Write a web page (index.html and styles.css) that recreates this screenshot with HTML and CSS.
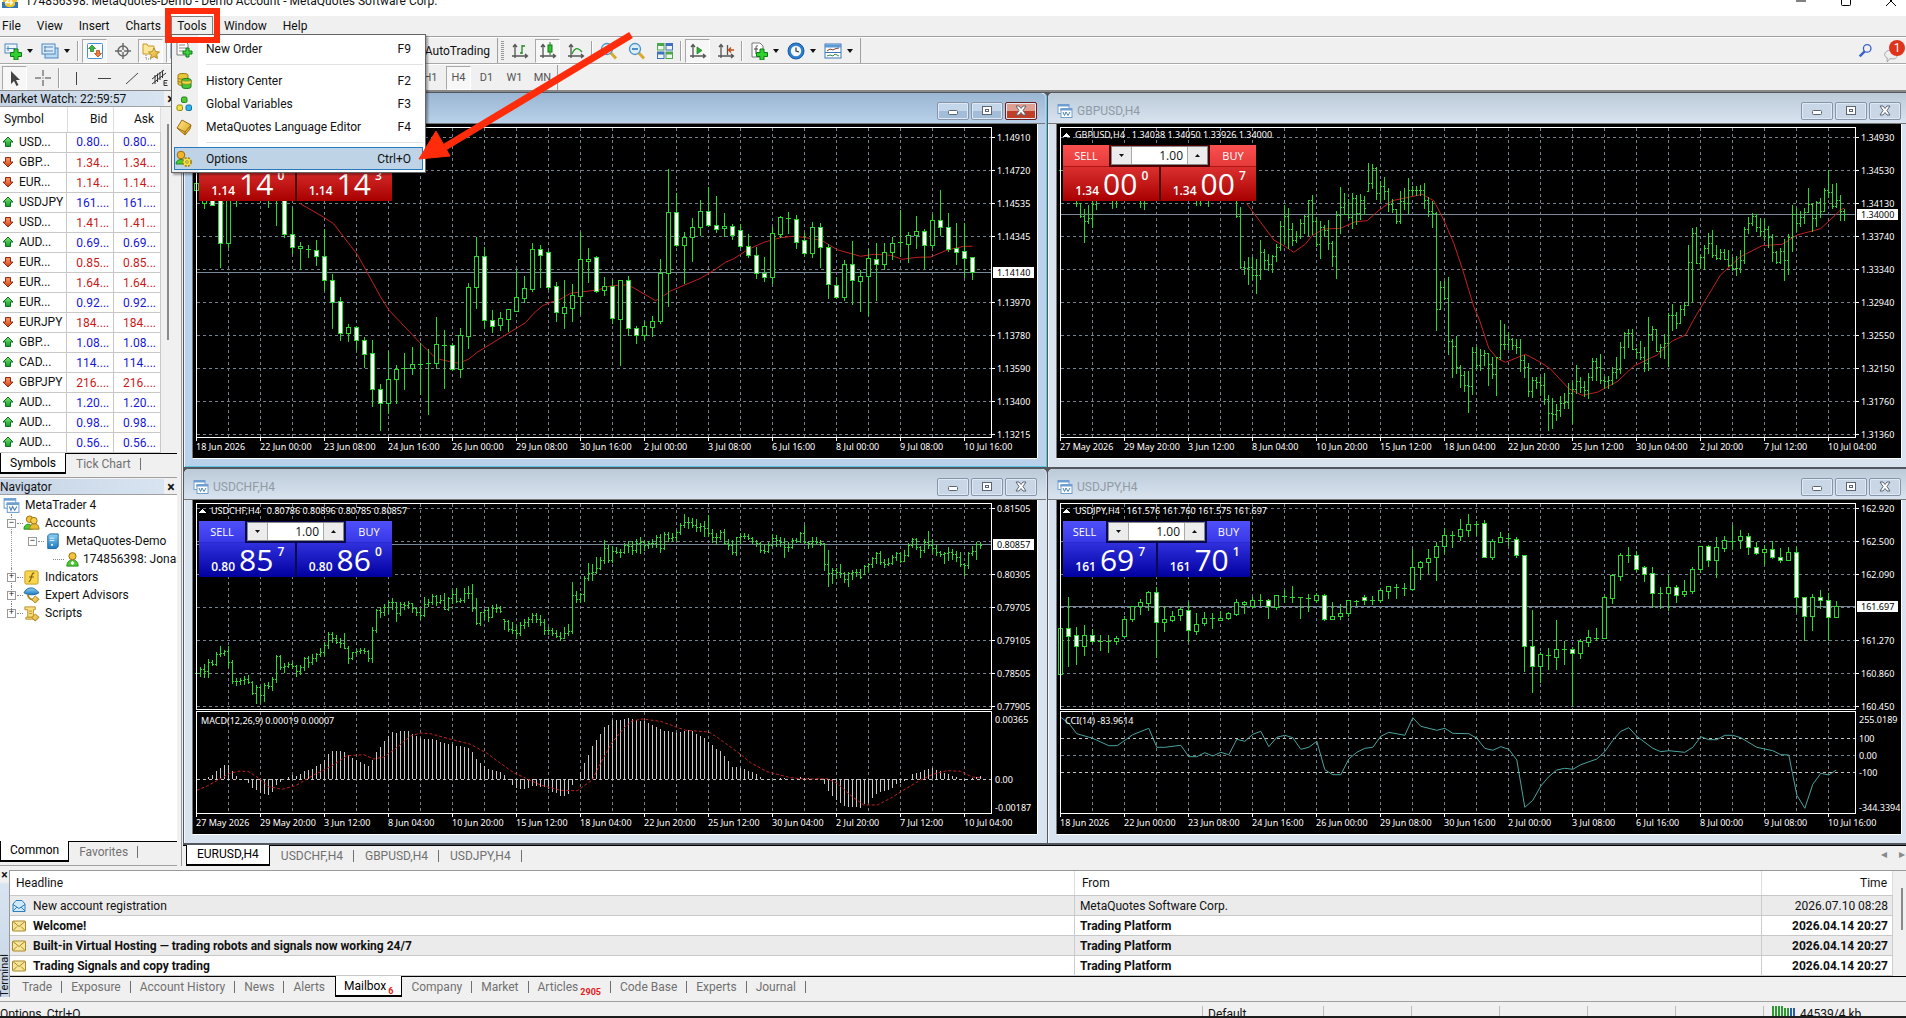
FILE: index.html
```html
<!DOCTYPE html>
<html lang="en">
<head>
<meta charset="utf-8">
<title>MetaTrader 4</title>
<link rel="stylesheet" href="styles.css">
</head>
<body>
<svg class="defs" aria-hidden="true">
  <defs>
    <linearGradient id="gGreen" x1="0" y1="0" x2="0" y2="1"><stop offset="0" stop-color="#7fe67a"/><stop offset="1" stop-color="#139a2a"/></linearGradient>
    <linearGradient id="gRed" x1="0" y1="0" x2="0" y2="1"><stop offset="0" stop-color="#ff9a6a"/><stop offset="1" stop-color="#d23a10"/></linearGradient>
    <linearGradient id="gGold" x1="0" y1="0" x2="1" y2="1"><stop offset="0" stop-color="#ffe98a"/><stop offset="1" stop-color="#d9a21b"/></linearGradient>
    <linearGradient id="gBlue" x1="0" y1="0" x2="0" y2="1"><stop offset="0" stop-color="#8fd0f5"/><stop offset="1" stop-color="#1c79bd"/></linearGradient>
  </defs>
  <symbol id="i-up" viewBox="0 0 12 12"><path d="M6 1l5 5H8.500v4.500h-5V6H1z" fill="url(#gGreen)" stroke="#0d6e1e"/></symbol>
  <symbol id="i-down" viewBox="0 0 12 12"><path d="M6 11L1 6h2.500V1.500h5V6H11z" fill="url(#gRed)" stroke="#8e2a0b"/></symbol>
  <symbol id="i-charts" viewBox="0 0 16 16"><rect x="1" y="1.500" width="11" height="9" fill="#fff" stroke="#6f9fd0"/><path d="M1 2.500h11" stroke="#6f9fd0" stroke-width="2"/><path d="M3 7l1.500-1L6 7" fill="none" stroke="#4a7fb8"/><rect x="4" y="5.500" width="11" height="9" fill="#fff" stroke="#6f9fd0"/><path d="M4 6.500h11" stroke="#6f9fd0" stroke-width="2"/><path d="M6 9l1.500 3.500L9 9l2 3.500L13 9" fill="none" stroke="#4a7fb8"/></symbol>
  <symbol id="i-newchart" viewBox="0 0 18 18"><rect x="1" y="2" width="12" height="9" fill="#eef6fd" stroke="#4f86bd"/><path d="M4 4v5M2.500 6.500h9" stroke="#4f86bd" fill="none"/><path d="M10 7h4v3.500h3.500v4H14V18h-4v-3.500H6.500v-4H10z" fill="#2fd02f" stroke="#0f7a14"/></symbol>
  <symbol id="i-profiles" viewBox="0 0 18 18"><rect x="4" y="6" width="13" height="10" fill="#b9d8f2" stroke="#4f86bd"/><rect x="1" y="2" width="13" height="10" fill="#dcebf8" stroke="#4f86bd"/><path d="M3 5h9M4 4v6M3 9h9" stroke="#4f86bd" fill="none"/></symbol>
  <symbol id="i-market" viewBox="0 0 18 18"><rect x="1.500" y="1.500" width="15" height="15" rx="1" fill="#fff" stroke="#4b8ecb"/><path d="M6 3l3.500 3.500H7.500v3h-3v-3h-2z" fill="#39b83d" stroke="#157a1b" stroke-width=".7"/><path d="M12 15l-3.500-3.500h2v-3h3v3h2z" fill="#f07a3a" stroke="#b03f10" stroke-width=".7"/></symbol>
  <symbol id="i-target" viewBox="0 0 18 18"><circle cx="9" cy="9" r="5" fill="none" stroke="#666" stroke-width="1.400"/><path d="M9 1v7M9 10v7M1 9h7M10 9h7" stroke="#666" stroke-width="1.400"/></symbol>
  <symbol id="i-folderstar" viewBox="0 0 18 18"><path d="M1 2h4l1 2h6v8H1z" fill="#ffe79a" stroke="#c79a2a"/><path d="M4 13v4h5" fill="none" stroke="#777" stroke-dasharray="1 1"/><path d="M12 6l1.700 3.600 3.800.4-2.800 2.600.8 3.900-3.500-2-3.500 2 .8-3.900L6.500 10l3.800-.4z" fill="url(#gGold)" stroke="#a87c12" stroke-width=".8"/></symbol>
  <symbol id="i-bars" viewBox="0 0 18 18"><path d="M4 3v13M1 14h15M2 5l2-2.500L6 5M14 12l2.500 2L14 16" fill="none" stroke="#555" stroke-width="1.300"/><path d="M11 3v9M9 11h2M11 4h3" stroke="#1f8a1f" stroke-width="1.300" fill="none"/></symbol>
  <symbol id="i-candles" viewBox="0 0 18 18"><path d="M4 3v13M1 14h15M2 5l2-2.500L6 5M14 12l2.500 2L14 16" fill="none" stroke="#555" stroke-width="1.300"/><path d="M11 0v13" stroke="#157a15"/><rect x="9" y="3" width="4" height="7" fill="#35c23a" stroke="#157a15"/></symbol>
  <symbol id="i-line" viewBox="0 0 18 18"><path d="M4 3v13M1 14h15M2 5l2-2.500L6 5M14 12l2.500 2L14 16" fill="none" stroke="#555" stroke-width="1.300"/><path d="M5 12c2-5 5-8 10-2" stroke="#2c9a30" stroke-width="1.300" fill="none"/></symbol>
  <symbol id="i-zoomin" viewBox="0 0 18 18"><path d="M10.500 10.500l5.500 6" stroke="#d8ab2c" stroke-width="3"/><circle cx="7" cy="7" r="5.500" fill="#d9effb" stroke="#4f90c6" stroke-width="1.300"/><path d="M4 7h6M7 4v6" stroke="#2e77b5" stroke-width="1.600"/></symbol>
  <symbol id="i-zoomout" viewBox="0 0 18 18"><path d="M10.500 10.500l5.500 6" stroke="#d8ab2c" stroke-width="3"/><circle cx="7" cy="7" r="5.500" fill="#d9effb" stroke="#4f90c6" stroke-width="1.300"/><path d="M4 7h6" stroke="#2e77b5" stroke-width="1.600"/></symbol>
  <symbol id="i-tile" viewBox="0 0 18 18"><rect x="1" y="1" width="7.500" height="7.500" fill="#4ca64a"/><rect x="9.500" y="1" width="7.500" height="7.500" fill="#3f6fc0"/><rect x="1" y="9.500" width="7.500" height="7.500" fill="#3f6fc0"/><rect x="9.500" y="9.500" width="7.500" height="7.500" fill="#4ca64a"/><path d="M2 4h5.500v3.500H2zM10.500 4H16v3.500h-5.500zM2 12.500h5.500V16H2zM10.500 12.500H16V16h-5.500z" fill="#eef6ee"/></symbol>
  <symbol id="i-scroll" viewBox="0 0 18 18"><path d="M4 3v13M1 14h15M2 5l2-2.500L6 5M14 12l2.500 2L14 16" fill="none" stroke="#555" stroke-width="1.300"/><path d="M8 5l5 3.500L8 12z" fill="#2fae35" stroke="#157a15" stroke-width=".7"/></symbol>
  <symbol id="i-shift" viewBox="0 0 18 18"><path d="M4 3v13M1 14h15M2 5l2-2.500L6 5M14 12l2.500 2L14 16M10.500 3v10" fill="none" stroke="#555" stroke-width="1.300"/><path d="M17 8h-5M14 5.500L11.500 8l2.500 2.500" fill="none" stroke="#c04a12" stroke-width="1.300"/></symbol>
  <symbol id="i-indicators" viewBox="0 0 18 18"><path d="M2 1h8l3 3v11H2z" fill="#fff" stroke="#777"/><path d="M8 4c-2-1-2 1-2 3v5M4 7h4" fill="none" stroke="#444"/><path d="M10 7h4v3.500h3.500v4H14V18h-4v-3.500H6.500v-4H10z" fill="#2fd02f" stroke="#0f7a14"/></symbol>
  <symbol id="i-clock" viewBox="0 0 18 18"><circle cx="9" cy="9" r="8" fill="#2f7fd0" stroke="#155aa0"/><circle cx="9" cy="9" r="5.200" fill="#f3f8fd"/><path d="M9 5.500V9l3 1" fill="none" stroke="#333" stroke-width="1.200"/></symbol>
  <symbol id="i-template" viewBox="0 0 18 18"><rect x="1" y="2" width="16" height="14" fill="#fff" stroke="#3f78b5"/><path d="M1 4h16" stroke="#5b9bd8" stroke-width="3"/><path d="M3 9l3-2 3 1 3-1.500 3-.5" fill="none" stroke="#8a3a2a"/><path d="M1 10.500h16" stroke="#3f78b5"/><path d="M3 14l3-1 3 1 2-2 4 2" fill="none" stroke="#3a8a4a"/></symbol>
  <symbol id="i-cursor" viewBox="0 0 18 18"><path d="M5 2v13l3-3 2.500 5 2-1-2.500-5h4z" fill="#444"/></symbol>
  <symbol id="i-cross" viewBox="0 0 18 18"><path d="M9 1v6M9 11v6M1 9h6M11 9h6M8.500 9h1" stroke="#444"/></symbol>
  <symbol id="i-vline" viewBox="0 0 18 18"><path d="M9.500 3v13" stroke="#444"/></symbol>
  <symbol id="i-hline" viewBox="0 0 18 18"><path d="M3 9.500h13" stroke="#444"/></symbol>
  <symbol id="i-trend" viewBox="0 0 18 18"><path d="M3 15L15 4" stroke="#444"/></symbol>
  <symbol id="i-channel" viewBox="0 0 18 18"><path d="M1 10L13 1M1 15L15 4M4 6v9M6.500 4.500V13M9 3v8M11.500 1.500V9" stroke="#333" fill="none"/><path d="M16.500 11.500H13v5h3.500M13 14h3" stroke="#333" fill="none"/></symbol>
  <symbol id="i-order" viewBox="0 0 18 18"><path d="M2 1h8l3 3v11H2z" fill="#fff" stroke="#777"/><path d="M4 5h6M4 8h7M4 11h4" stroke="#888"/><path d="M11 8h3v3h3v3h-3v3h-3v-3H8v-3h3z" fill="#3ad040" stroke="#0f7a14"/></symbol>
  <symbol id="i-history" viewBox="0 0 18 18"><path d="M3 3c0-2 10-2 10 0v9c0 2-10 2-10 0z" fill="#e8c63a" stroke="#9a7a12"/><path d="M3 6c0 1.500 10 1.500 10 0M3 9c0 1.500 10 1.500 10 0" fill="none" stroke="#9a7a12"/><path d="M7 8c0-2 9-2 9 0v7c0 2-9 2-9 0z" fill="#45c63a" stroke="#1a7a18"/><path d="M7 8c0 1.600 9 1.600 9 0v3c0 1.600-9 1.600-9 0z" fill="#f1da4a" stroke="#9a7a12" stroke-width=".7"/></symbol>
  <symbol id="i-globals" viewBox="0 0 18 18"><rect x="6.500" y="2" width="5.500" height="5.500" rx="1.500" fill="#4fc832" stroke="#24811a"/><rect x="2" y="10" width="5.500" height="5.500" rx="1.500" fill="#efe43a" stroke="#9a8a12"/><rect x="11" y="10" width="5.500" height="5.500" rx="1.500" fill="#2fb6ea" stroke="#13709c"/></symbol>
  <symbol id="i-editor" viewBox="0 0 18 18"><path d="M2 10l5-8 9 5-1 4-5 6z" fill="url(#gGold)" stroke="#9a6a12"/><path d="M2 10l8 4 6-7M10 14v2.500" fill="none" stroke="#9a6a12"/></symbol>
  <symbol id="i-options" viewBox="0 0 18 18"><path d="M1 14c0-6 10-6 10 0z" fill="#4fc832" stroke="#1f8a1a"/><circle cx="6" cy="5" r="3.800" fill="#f0b52a" stroke="#9a6a12"/><circle cx="12" cy="12" r="4" fill="#f7e04a" stroke="#a88a12" stroke-width="2" stroke-dasharray="2 1.200"/><circle cx="12" cy="12" r="3.300" fill="#f7e04a"/><circle cx="12" cy="12" r="1.300" fill="#fff" stroke="#a88a12"/></symbol>
  <symbol id="i-users" viewBox="0 0 18 18"><path d="M1 15c0-7 9-7 9 0z" fill="#4fc832" stroke="#1f8a1a"/><path d="M7 15c0-8 10-8 10 0z" fill="#e8bc32" stroke="#9a7a12"/><circle cx="7" cy="4.500" r="3.500" fill="#f0c53a" stroke="#9a6a12"/><circle cx="11.500" cy="6" r="3.500" fill="#f5d24a" stroke="#9a6a12"/></symbol>
  <symbol id="i-user" viewBox="0 0 18 18"><path d="M3 16c0-9 12-9 12 0z" fill="#4fc832" stroke="#1f8a1a"/><path d="M9 10l-2 3 2 2 2-2z" fill="#fff"/><circle cx="9" cy="5.500" r="3.800" fill="#f0c53a" stroke="#9a6a12"/></symbol>
  <symbol id="i-server" viewBox="0 0 18 18"><path d="M4 3l2-2h9v13l-2 2.500H4z" fill="url(#gBlue)" stroke="#15659c"/><path d="M6 5.500h5M6 8h5" stroke="#e6f5ff"/><circle cx="8.500" cy="12.500" r="1.200" fill="#e6f5ff"/></symbol>
  <symbol id="i-func" viewBox="0 0 18 18"><rect x="2" y="2" width="14" height="14" rx="1.500" fill="#f7d64e" stroke="#c09a20"/><path d="M12 4.500c-4-1-2.500 9-6 9M6.500 8.500h5" fill="none" stroke="#7a5a10" stroke-width="1.200"/></symbol>
  <symbol id="i-expert" viewBox="0 0 18 18"><path d="M1 6c3-5 6-5 8-5s4 1 8 5c-4 3-12 3-16 0z" fill="url(#gBlue)" stroke="#15659c"/><path d="M5 8c1 5 4 6 8 5" fill="none" stroke="#a8861a" stroke-width="2"/><path d="M13 9.500l4 3.500-4 4-3.500-3.500z" fill="url(#gGold)" stroke="#a87c12"/></symbol>
  <symbol id="i-script" viewBox="0 0 18 18"><path d="M2 2h11v3h-2v8H5V5H2z" fill="#f7de7a" stroke="#b8922a"/><path d="M6.500 6.500h3M6.500 9h3" stroke="#b8922a"/><path d="M3 13h9v2H3z" fill="#f7de7a" stroke="#b8922a"/><path d="M13 9.500l4 3.500-4 4-3.500-3.500z" fill="url(#gGold)" stroke="#a87c12"/></symbol>
  <symbol id="i-mail" viewBox="0 0 14 12"><rect x=".5" y="1" width="13" height="10" rx="1" fill="#f7e59a" stroke="#a8882a"/><path d="M1 1.500l6 5 6-5M1 10.500l4-4M13 10.500l-4-4" fill="none" stroke="#a8882a"/></symbol>
  <symbol id="i-mailopen" viewBox="0 0 14 12"><path d="M1 4l3-3.500h6L13 4v7.500H1z" fill="#cfe8fa" stroke="#2f7fbf"/><path d="M1 4.500l6 4 6-4M1 11l4-4M13 11L9 7" fill="none" stroke="#2f7fbf"/></symbol>
  <symbol id="i-dn" viewBox="0 0 7 4"><path d="M0 0h7L3.500 4z" fill="#111"/></symbol>
  <symbol id="i-upt" viewBox="0 0 7 4"><path d="M0 4h7L3.500 0z" fill="#111"/></symbol>
</svg>

<header class="titlebar">
  <svg class="appicon" viewBox="0 0 16 16"><circle cx="8" cy="8" r="7" fill="#f4c52c"/><path d="M0 9h3v3c2 3 8 3 10 0V9h3v6H0z" fill="#2f78b8"/><path d="M9 12V4L4 9.500h7" fill="none" stroke="#fff" stroke-width="1.500"/></svg>
  <h1 class="titletext">174856398: MetaQuotes-Demo - Demo Account - MetaQuotes Software Corp.</h1>
  <div class="syskeys">
    <button aria-label="Minimize"><svg viewBox="0 0 10 10"><path d="M0 5h10" stroke="#000"/></svg></button>
    <button aria-label="Maximize"><svg viewBox="0 0 10 10"><rect x=".5" y=".5" width="9" height="9" rx="1" fill="none" stroke="#000"/></svg></button>
    <button aria-label="Close"><svg viewBox="0 0 10 10"><path d="M0 0l10 10M10 0L0 10" stroke="#000"/></svg></button>
  </div>
</header>

<nav class="menubar">
  <button>File</button><button>View</button><button>Insert</button><button>Charts</button>
  <div class="menuwrap">
    <button class="open" aria-expanded="true">Tools</button>
    <div class="menu" role="menu">
      <button role="menuitem"><svg><use href="#i-order"/></svg><span>New Order</span><kbd>F9</kbd></button>
      <hr>
      <button role="menuitem"><svg><use href="#i-history"/></svg><span>History Center</span><kbd>F2</kbd></button>
      <button role="menuitem"><svg><use href="#i-globals"/></svg><span>Global Variables</span><kbd>F3</kbd></button>
      <button role="menuitem"><svg><use href="#i-editor"/></svg><span>MetaQuotes Language Editor</span><kbd>F4</kbd></button>
      <hr>
      <button role="menuitem" class="hot"><svg><use href="#i-options"/></svg><span>Options</span><kbd>Ctrl+O</kbd></button>
    </div>
    <div class="callout"></div>
  </div>
  <button>Window</button><button>Help</button>
</nav>

<div class="toolbar">
  <div class="tools standard">
    <button class="dd" aria-label="New chart"><svg><use href="#i-newchart"/></svg></button>
    <button class="dd" aria-label="Profiles"><svg><use href="#i-profiles"/></svg></button>
    <i class="sep"></i>
    <button class="on" aria-label="Market Watch"><svg><use href="#i-market"/></svg></button>
    <button aria-label="Data Window"><svg><use href="#i-target"/></svg></button>
    <button class="on" aria-label="Navigator"><svg><use href="#i-folderstar"/></svg></button>
    <button class="on" aria-label="Terminal"><svg><use href="#i-template"/></svg></button>
    <button class="auto">AutoTrading</button>
  </div>
  <div class="tools charts">
    <i class="grip"></i>
    <button aria-label="Bar chart"><svg><use href="#i-bars"/></svg></button>
    <button class="on" aria-label="Candlesticks"><svg><use href="#i-candles"/></svg></button>
    <button aria-label="Line chart"><svg><use href="#i-line"/></svg></button>
    <i class="sep"></i>
    <button aria-label="Zoom in"><svg><use href="#i-zoomin"/></svg></button>
    <button aria-label="Zoom out"><svg><use href="#i-zoomout"/></svg></button>
    <button aria-label="Tile windows"><svg><use href="#i-tile"/></svg></button>
    <i class="sep"></i>
    <button class="on" aria-label="Auto scroll"><svg><use href="#i-scroll"/></svg></button>
    <button aria-label="Chart shift"><svg><use href="#i-shift"/></svg></button>
    <i class="sep wide"></i>
    <button class="dd" aria-label="Indicators"><svg><use href="#i-indicators"/></svg></button>
    <button class="dd" aria-label="Periods"><svg><use href="#i-clock"/></svg></button>
    <button class="dd" aria-label="Templates"><svg><use href="#i-template"/></svg></button>
  </div>
  <div class="alerts">
    <button aria-label="Search"><svg viewBox="0 0 18 18"><circle cx="11" cy="6.500" r="4.500" fill="none" stroke="#3a62c8" stroke-width="1.600"/><path d="M8 10l-6 6" stroke="#3a62c8" stroke-width="3"/></svg></button>
    <button class="bubble" aria-label="Messages"><svg viewBox="0 0 18 18"><path d="M2 9c0-7 15-7 15 0s-6 5-9 5l-3 4v-5c-2-1-3-2-3-4z" fill="#eee" stroke="#999"/></svg><b>1</b></button>
  </div>
</div>

<div class="toolbar second">
  <div class="tools drawing">
    <button class="on" aria-label="Cursor"><svg><use href="#i-cursor"/></svg></button>
    <button aria-label="Crosshair"><svg><use href="#i-cross"/></svg></button>
    <i class="sep"></i>
    <button aria-label="Vertical line"><svg><use href="#i-vline"/></svg></button>
    <button aria-label="Horizontal line"><svg><use href="#i-hline"/></svg></button>
    <button aria-label="Trendline"><svg><use href="#i-trend"/></svg></button>
    <button aria-label="Channel"><svg><use href="#i-channel"/></svg></button>
    <button class="period first">H1</button><button class="period on">H4</button><button class="period">D1</button><button class="period">W1</button><button class="period">MN</button>
  </div>
</div>

<main class="workspace">
  <aside class="side">
    <section class="dock">
      <h2 class="dockhead"><span>Market Watch: 22:59:57</span><button aria-label="Close Market Watch">×</button></h2>
      <div class="watch">
        <table class="quotes">
          <thead><tr><th>Symbol</th><th>Bid</th><th>Ask</th></tr></thead>
          <tbody id="quotes"></tbody>
        </table>
        <i class="thumb"></i>
      </div>
      <div class="tabs"><button class="active">Symbols</button><button>Tick Chart</button></div>
    </section>
    <section class="dock grow">
      <h2 class="dockhead"><span>Navigator</span><button aria-label="Close Navigator">×</button></h2>
      <ul class="tree">
        <li class="root"><svg><use href="#i-charts"/></svg>MetaTrader 4</li>
        <li class="l1"><i class="knob">−</i><svg><use href="#i-users"/></svg>Accounts</li>
        <li class="l2"><i class="knob">−</i><svg><use href="#i-server"/></svg>MetaQuotes-Demo</li>
        <li class="l3"><svg><use href="#i-user"/></svg>174856398: Jonas</li>
        <li class="l1"><i class="knob">+</i><svg><use href="#i-func"/></svg>Indicators</li>
        <li class="l1"><i class="knob">+</i><svg><use href="#i-expert"/></svg>Expert Advisors</li>
        <li class="l1 last"><i class="knob">+</i><svg><use href="#i-script"/></svg>Scripts</li>
      </ul>
      <div class="tabs"><button class="active">Common</button><button>Favorites</button></div>
    </section>
  </aside>

  <div class="desk">
    <div class="mdi">
      <article class="win focus">
        <header class="wintitle"><svg class="ic"><use href="#i-charts"/></svg><div class="keys"></div></header>
        <div class="chart" data-chart="eurusd">
          <div class="trade red">
            <button class="side-btn" aria-label="Sell"></button><div class="vol"></div><button class="side-btn" aria-label="Buy"></button>
            <div class="price"><small>1.14</small><b>14</b><sup>0</sup></div><div class="price"><small>1.14</small><b>14</b><sup>3</sup></div>
          </div>
        </div>
      </article>
      <article class="win">
        <header class="wintitle"><svg class="ic"><use href="#i-charts"/></svg><h3>GBPUSD,H4</h3><div class="keys"></div></header>
        <div class="chart" data-chart="gbpusd">
          <div class="trade red">
            <button class="side-btn">SELL</button><div class="vol"><button aria-label="Less"><svg><use href="#i-dn"/></svg></button><input aria-label="GBPUSD volume" value="1.00"><button aria-label="More"><svg><use href="#i-upt"/></svg></button></div><button class="side-btn">BUY</button>
            <div class="price"><small>1.34</small><b>00</b><sup>0</sup></div><div class="price"><small>1.34</small><b>00</b><sup>7</sup></div>
          </div>
        </div>
      </article>
      <article class="win">
        <header class="wintitle"><svg class="ic"><use href="#i-charts"/></svg><h3>USDCHF,H4</h3><div class="keys"></div></header>
        <div class="chart" data-chart="usdchf">
          <div class="trade">
            <button class="side-btn">SELL</button><div class="vol"><button aria-label="Less"><svg><use href="#i-dn"/></svg></button><input aria-label="USDCHF volume" value="1.00"><button aria-label="More"><svg><use href="#i-upt"/></svg></button></div><button class="side-btn">BUY</button>
            <div class="price"><small>0.80</small><b>85</b><sup>7</sup></div><div class="price"><small>0.80</small><b>86</b><sup>0</sup></div>
          </div>
        </div>
      </article>
      <article class="win">
        <header class="wintitle"><svg class="ic"><use href="#i-charts"/></svg><h3>USDJPY,H4</h3><div class="keys"></div></header>
        <div class="chart" data-chart="usdjpy">
          <div class="trade narrow">
            <button class="side-btn">SELL</button><div class="vol"><button aria-label="Less"><svg><use href="#i-dn"/></svg></button><input aria-label="USDJPY volume" value="1.00"><button aria-label="More"><svg><use href="#i-upt"/></svg></button></div><button class="side-btn">BUY</button>
            <div class="price"><small>161</small><b>69</b><sup>7</sup></div><div class="price"><small>161</small><b>70</b><sup>1</sup></div>
          </div>
        </div>
      </article>
    </div>
    <div class="tabs desktabs"><button class="active">EURUSD,H4</button><button>USDCHF,H4</button><button>GBPUSD,H4</button><button>USDJPY,H4</button><span class="scrollers">◂<span>▸</span></span></div>
  </div>
</main>

<section class="terminal">
  <div class="strip"><button aria-label="Close Terminal">×</button><span>Terminal</span></div>
  <div class="mailpane">
    <div class="mailwrap">
      <table class="mail">
        <thead><tr><th>Headline</th><th>From</th><th>Time</th></tr></thead>
        <tbody>
          <tr class="read"><td><svg><use href="#i-mailopen"/></svg>New account registration</td><td>MetaQuotes Software Corp.</td><td>2026.07.10 08:28</td></tr>
          <tr><td><svg><use href="#i-mail"/></svg>Welcome!</td><td>Trading Platform</td><td>2026.04.14 20:27</td></tr>
          <tr><td><svg><use href="#i-mail"/></svg>Built-in Virtual Hosting — trading robots and signals now working 24/7</td><td>Trading Platform</td><td>2026.04.14 20:27</td></tr>
          <tr><td><svg><use href="#i-mail"/></svg>Trading Signals and copy trading</td><td>Trading Platform</td><td>2026.04.14 20:27</td></tr>
        </tbody>
      </table>
      <i class="mailthumb"></i>
    </div>
    <div class="tabs termtabs"><button>Trade</button><button>Exposure</button><button>Account History</button><button>News</button><button>Alerts</button><button class="active">Mailbox<sub>6</sub></button><button>Company</button><button>Market</button><button>Articles<sub>2905</sub></button><button>Code Base</button><button>Experts</button><button>Journal</button></div>
  </div>
</section>

<footer class="status">
  <span class="hint">Options, Ctrl+O</span><span class="cell profile">Default</span><span class="cell"></span><span class="cell"></span><span class="cell"></span><span class="cell"></span><span class="cell"></span>
  <span class="cell net"><svg viewBox="0 0 24 14"><path d="M1 0v14M4 0v14M7 0v14M10 0v14M13 2v12M16 2v12" stroke="#2c9a30" stroke-width="2"/><path d="M19 2v12M22 2v12" stroke="#2a5ab8" stroke-width="2"/></svg>44539/4 kb</span>
</footer>

<svg class="pointer" aria-hidden="true" viewBox="0 0 220 130"><path d="M213 3L27 115" stroke="#fe2c0a" stroke-width="7"/><path d="M1 127L18 99L32 124z" fill="#fe2c0a" stroke="#fe2c0a"/></svg>

<script src="charts.js"></script>
</body>
</html>
```
FILE: charts.js
```js
const NS = 'http://www.w3.org/2000/svg';

/* Candles: [high, body top, body bottom, low, filled], in thirds of a pixel. */
const EUR = [
[250,250,270,270,0],[200,200,309,325,0],[200,200,315,315,1],[200,220,430,500,1],[200,220,430,440,0],[200,250,300,318,0],
[200,220,240,290,0],[200,220,240,290,0],[200,220,240,290,0],[200,220,300,322,0],[200,250,290,375,1],[200,220,403,412,1],
[320,403,440,458,1],[425,439,445,508,0],[435,446,451,472,0],[420,451,469,494,1],[388,469,541,570,1],[523,541,605,684,1],
[591,604,698,719,1],[672,682,698,722,0],[678,682,721,747,1],[712,721,761,800,1],[720,760,868,917,1],[853,868,908,990,1],
[754,838,908,938,0],[796,808,838,908,0],[760,803,803,867,0],[741,793,803,822,0],[728,793,793,881,0],[748,789,789,941,0],
[652,733,788,805,0],[690,735,735,863,0],[730,736,808,811,1],[684,706,808,832,0],[550,562,707,743,0],[411,469,560,623,0],
[440,469,659,683,1],[630,660,677,695,1],[636,655,674,690,0],[626,626,656,692,0],[510,592,632,632,0],[529,565,593,606,0],
[430,448,566,574,0],[436,448,464,560,1],[454,457,560,566,1],[547,559,637,662,1],[541,622,638,684,0],[553,586,623,662,0],
[396,478,587,643,0],[444,476,482,547,0],[468,472,572,575,1],[532,559,571,586,0],[541,559,653,668,1],[541,541,656,795,0],
[529,541,685,704,1],[679,685,704,728,1],[662,679,706,721,0],[649,664,680,707,0],[477,520,664,668,0],[207,337,520,618,0],
[280,337,436,438,1],[397,412,436,548,0],[354,382,412,483,0],[300,334,380,405,0],[261,334,376,379,1],[288,376,386,396,1],
[339,379,385,407,0],[372,379,404,416,1],[371,391,439,441,1],[403,439,466,470,1],[440,466,520,533,1],[471,519,530,542,1],
[381,400,530,549,0],[348,352,401,410,0],[336,353,358,398,0],[345,358,425,443,1],[400,421,460,467,1],[366,382,460,470,0],
[370,382,442,501,1],[433,442,553,594,1],[530,556,590,593,1],[481,493,590,599,0],[423,493,541,611,1],[511,529,542,632,0],
[446,475,529,645,0],[430,478,493,600,1],[429,455,493,507,0],[411,430,455,477,0],[330,427,427,467,0],[396,406,431,486,0],
[348,394,406,443,0],[386,394,436,503,1],[341,361,436,440,0],[270,361,382,405,1],[339,382,448,452,1],[369,445,455,491,1],
[370,454,473,532,1],[472,472,517,536,1]];

const JPY = [
[480,490,628,632,0],[396,490,514,602,1],[487,511,544,596,1],[480,511,544,570,0],[493,511,529,530,1],[511,527,527,554,0],
[509,527,527,560,0],[514,518,527,536,0],[454,463,512,515,0],[424,424,461,467,0],[403,412,424,446,0],[378,382,413,434,0],
[367,382,472,575,1],[427,463,472,497,0],[438,452,464,467,0],[426,433,451,466,0],[410,436,496,527,1],[445,476,497,508,0],
[442,458,475,480,0],[445,460,460,490,0],[438,458,464,464,0],[440,445,458,463,0],[403,412,446,451,0],[407,412,417,443,0],
[397,404,422,427,0],[387,405,405,420,0],[402,406,424,458,1],[390,391,427,432,0],[376,394,397,410,0],[363,397,397,410,0],
[395,397,397,458,0],[388,398,402,438,0],[385,389,406,412,0],[388,391,461,464,1],[412,452,461,462,0],[418,445,452,463,0],
[404,406,443,454,0],[405,408,408,420,0],[390,395,406,418,1],[393,405,405,417,0],[370,376,404,410,0],[364,364,377,398,0],
[358,367,367,398,0],[355,370,370,390,0],[252,307,372,374,0],[287,292,307,342,0],[251,278,292,324,0],[232,244,275,344,0],
[188,211,244,265,0],[198,211,211,246,0],[163,193,214,224,0],[148,178,194,214,0],[167,177,177,210,0],[165,175,275,276,1],
[222,229,276,282,0],[200,217,230,231,0],[205,218,222,240,0],[217,223,271,275,1],[270,271,542,617,1],[436,542,602,681,1],
[560,568,602,652,0],[548,569,569,612,0],[465,553,575,612,0],[528,553,553,598,0],[545,553,563,719,1],[522,528,564,578,0],
[495,516,530,542,0],[488,519,519,525,0],[390,397,518,520,0],[328,331,398,413,0],[265,271,332,345,0],[246,271,271,291,0],
[258,271,311,318,1],[303,307,326,348,1],[307,325,385,425,1],[366,384,384,428,0],[331,367,385,434,0],[361,367,389,411,1],
[345,377,388,392,0],[307,313,377,384,0],[243,244,312,322,0],[240,244,284,303,1],[216,247,284,335,0],[213,226,248,257,0],
[180,227,227,252,0],[196,214,226,249,0],[205,214,245,266,1],[230,245,263,268,1],[240,253,262,298,0],[229,253,275,279,1],
[249,275,284,291,1],[246,262,284,285,0],[246,262,395,440,1],[395,395,452,524,1],[386,395,452,494,0],[376,395,406,430,1],
[385,406,455,524,1],[407,424,455,457,0]];

/* Bars: high, low, close per bar; each bar opens at the previous close. */
const GBP = [
258,288,270, 280,340,300, 290,340,320, 300,350,340, 340,378,370, 370,412,409, 388,485,424, 376,430,415, 360,440,372, 340,386,350,
300,350,330, 300,350,330, 300,360,340, 340,383,350, 330,380,340, 300,350,330, 300,350,330, 300,350,330, 300,350,330, 300,350,340,
330,380,370, 350,388,360, 300,350,330, 300,350,330, 300,350,330, 300,350,330, 300,350,330, 300,350,330, 300,350,330, 300,350,330,
300,350,330, 300,350,330, 300,350,330, 300,350,340, 340,376,350, 340,376,350, 300,350,340, 340,377,350, 300,350,330, 300,350,330,
300,350,330, 300,350,330, 300,350,330, 300,360,350, 350,412,409, 380,564,560, 543,583,565, 530,613,562, 532,598,584, 538,640,586,
480,597,516, 508,566,541, 522,570,553, 524,577,528, 492,542,500, 424,510,437, 376,490,408, 385,503,446, 428,494,480, 454,487,468,
418,475,428, 404,458,408, 360,464,360, 346,462,424, 411,497,493, 424,534,440, 436,468,450, 420,508,490, 484,557,529, 393,593,405,
321,458,382, 340,402,402, 357,414,411, 339,445,354, 345,431,400, 343,416,360, 349,402,384, 249,332,310, 251,324,264, 262,358,338,
303,362,319, 290,356,333, 323,393,373, 358,397,388, 388,430,424, 334,428,364, 325,388,370, 294,399,330, 318,344,330, 318,346,330,
316,346,330, 309,384,361, 350,408,392, 364,440,398, 396,749,688, 604,688,620, 602,656,655, 592,821,783, 778,890,798, 769,880,862,
855,920,884, 873,933,916, 874,995,918, 800,943,816, 800,864,856];
const GBP_LATE = [
1047,1110,1066, 1050,1095,1060, 1060,1155,1093, 1072,1135,1123, 1070,1185,1072, 960,1076,1033, 972,1048,1032, 996,1046,1018,
1015,1048,1035, 1018,1060,1040, 1017,1112,1080, 1065,1131,1100, 1088,1188,1173, 1130,1190,1140, 1132,1165,1147, 1130,1184,1156,
1120,1213,1197, 1185,1290,1240, 1194,1283,1243, 1212,1259,1230, 1187,1249,1210, 1178,1225,1206, 1150,1225,1180, 1146,1268,1168,
1095,1180,1143, 1130,1175,1161, 1143,1187,1170, 1120,1193,1130, 1075,1140,1084, 1073,1141,1102, 1062,1150,1140, 1128,1165,1144,
1128,1165,1140, 1102,1153,1117, 1070,1135,1108, 1027,1120,1042, 996,1074,998, 987,1042,1000, 987,1048,1048, 1044,1075,1055,
1023,1077,1070, 1042,1112,1090, 951,1109,1003, 977,1020,988, 987,1054,1054, 1033,1070,1040, 1003,1073,1028, 940,1097,944,
912,990,944, 935,984,968, 915,970,927, 906,945,915, 735,915,787, 684,904,700, 682,790,790, 766,803,771, 734,808,744, 700,759,730,
690,770,766, 734,776,774, 747,778,755, 748,778,778, 750,797,795, 770,810,805, 768,825,805, 750,815,780, 681,790,688, 652,700,670,
640,675,648, 642,694,682, 655,707,693, 657,721,688, 679,742,710, 702,783,755, 753,790,785, 744,788,754, 718,840,781, 702,823,710,
614,753,643, 625,692,670, 632,678,651, 623,668,635, 564,637,612, 609,694,654, 602,678,605, 595,650,632, 564,634,571, 510,592,577,
552,624,618, 548,621,600, 585,661,632, 628,661,643];
const CHF = [
612,630,623, 607,633,613, 598,637,618, 583,636,590, 585,600,598, 562,600,567, 543,572,565, 555,570,557, 543,607,590, 585,653,648,
640,660,648, 640,658,644, 633,657,642, 630,655,650, 647,688,685, 660,715,665, 662,715,690, 655,707,660, 650,668,663, 637,675,642,
570,650,573, 570,613,606, 593,620,603, 590,607,597, 590,610,603, 600,633,618, 600,627,605, 575,615,580, 573,605,592, 568,598,580,
563,588,567, 550,572,562, 530,570,540, 502,550,508, 500,532,518, 510,535,532, 520,545,533, 505,548,548, 543,595,578, 560,583,562,
552,568,558, 548,565,555, 549,565,558, 556,588,580, 487,590,495, 433,500,436, 427,455,440, 418,450,425, 408,445,412, 400,432,410,
410,467,445, 412,450,418, 410,432,420, 407,430,415, 413,440,430, 425,450,440, 430,462,450, 397,452,417, 403,423,410, 387,418,392,
390,420,412, 390,415,405, 385,432,432, 395,435,400, 375,415,387, 370,412,408, 400,412,405, 370,410,385, 363,398,385, 357,437,430,
400,478,475, 440,480,442, 432,462,435, 425,467,455, 420,457,428, 418,442,430, 423,440,438, 462,492,468, 465,497,492, 470,503,495,
480,518,505, 472,510,480, 462,490,470, 457,483,462, 443,470,450, 443,472,462, 450,480,470, 462,507,495, 485,508,495, 490,510,503,
495,517,513, 500,526,518, 487,520,505, 478,510,498, 350,503,390, 378,412,402, 383,412,388, 333,407,340, 293,345,325, 296,345,322,
277,325,308, 277,312,285, 225,295,250, 240,290,285, 242,290,258, 245,265,262, 253,277,262, 235,265,240, 228,262,242, 227,266,255,
223,260,235, 216,263,230, 226,255,240, 228,250,235, 222,247,234, 210,247,215, 208,260,250, 202,252,207, 202,228,218, 205,228,215,
195,225,200, 173,207,180, 147,187,172, 157,190,172, 160,187,180, 163,198,185, 175,197,183, 167,212,190, 150,213,205, 192,230,217,
205,237,217, 195,222,200, 192,237,235, 222,252,240, 225,267,262, 215,270,217, 205,235,212, 205,218,212, 207,222,218, 217,235,228,
225,242,235, 230,262,255, 238,264,258, 230,262,240, 208,242,218, 210,242,225, 215,243,230, 218,275,245, 230,258,245, 218,250,225,
218,232,228, 200,230,205, 180,235,232, 228,250,235, 215,245,228, 215,237,230, 225,240,235, 233,315,298, 255,362,325, 310,353,315,
310,340,322, 298,337,325, 320,350,342, 322,362,325, 315,342,320, 313,332,322, 313,340,335, 300,328,302, 293,318,297, 275,307,280,
260,293,265, 257,297,290, 283,307,296, 280,300,295, 270,297,275, 260,285,263, 260,292,288, 255,288,270, 233,273,240, 220,245,222,
218,253,245, 243,275,255, 223,260,230, 198,250,240, 223,265,250, 240,270,260, 257,272,267, 260,293,265, 247,285,262, 252,282,268,
257,287,275, 262,303,298, 295,330,300, 262,308,265, 243,270,258, 230,282,237, 230,250,240];
const MACD = [950,943,943,937,931,918,909,900,901,917,934,943,946,953,968,975,984,987,990,982,960,950,943,937,931,932,926,918,914,913,
903,896,885,867,858,858,858,861,870,878,884,890,896,903,884,861,846,828,813,801,804,798,798,798,807,813,819,822,822,822,825,831,834,
837,837,843,844,847,850,861,882,894,903,912,915,918,921,931,946,960,968,972,972,968,962,964,966,965,973,981,985,992,992,988,960,943,
922,894,870,843,825,807,786,780,765,766,765,762,759,763,764,768,768,774,780,785,793,797,799,802,804,802,799,796,799,808,814,820,830,
840,852,858,873,889,905,906,908,913,917,922,928,937,943,943,943,943,940,940,943,943,943,937,940,940,943,943,945,956,977,992,1004,1014,
1022,1025,1025,1025,1028,1018,1014,1000,986,980,978,975,968,958,953,947,941,928,923,922,916,912,910,915,918,925,928,932,936,943,948,
943,938,937,934];

/* Lines: x, y pairs in the same units; late parts continue at x + 1260. */
const join = (a, b) => [...a, ...b.map((v, i) => i % 2 ? v : v + 1260)];
const EUR_MA = join([358,310,430,352,459,371,530,463,600,590,625,630,720,730,765,774,790,781,835,790,865,777,890,757,1035,668,1060,640,
1085,618,1110,607,1135,600,1170,580,1250,570,1290,558,1320,555],
[75,555,97,562,165,602,190,587,210,573,300,535,345,508,375,487,400,476,440,450,490,427,540,413,580,409,610,412,665,422,710,449,780,469,
820,463,870,466,905,478,950,472,990,471,1040,450,1090,439,1116,439]);
const GBP_MA = join([618,370,700,480,735,500,760,517,795,492,815,467,850,447,900,445,945,425,980,422,1010,395,1055,362,1105,352,1145,343,
1180,362,1210,420,1240,490,1265,565,1300,680],
[57,720,85,805,110,835,135,847,195,823,240,847,270,867,325,926,365,946,410,937,470,905,520,858,590,825,635,783,675,765,
700,718,780,585,840,530,905,497,965,493,1010,465,1080,446,1100,428,1140,390,1152,384]);
const MACD_SIG = join([49,976,80,963,150,924,180,918,205,920,235,940,265,965,305,973,345,962,400,930,450,905,500,872,550,869,580,882,
610,876,640,855,690,813,720,804,750,806,800,820,870,838,920,865,950,888,1000,923,1080,960,1140,976,1190,977,1235,945],
[0,895,35,832,70,790,95,768,125,762,180,769,255,796,325,801,350,817,420,868,450,893,500,920,570,938,610,942,680,941,710,955,755,995,
790,1020,830,1020,870,1000,910,975,960,945,1000,927,1040,917,1080,919,1115,936,1140,938]);
const CCI = join([61,757,85,775,109,806,157,820,205,842,230,842,277,809,325,790,349,847,373,847,421,841,445,875,469,875,493,863,517,873,
541,862,565,869,589,823,613,829,637,808,661,799,685,845,709,817,733,811,757,818,781,853,805,847,829,829,853,914,877,929,901,929,925,882,
949,862,973,850,997,847,1021,814,1045,802,1093,811,1117,758,1141,784,1189,796,1213,790,1237,805,1285,806],
[49,820,73,850,97,856,121,845,145,853,169,885,193,1027,217,1006,241,963,265,935,289,915,313,910,337,913,361,899,409,882,433,860,457,826,
481,799,505,788,529,814,577,850,601,860,625,857,673,862,697,847,721,815,745,824,769,824,793,811,817,811,841,818,889,847,937,857,961,869,
985,870,1009,990,1033,1030,1057,958,1081,925,1105,930,1127,915]);

const SHORT = ['18 Jun 2026','22 Jun 00:00','23 Jun 08:00','24 Jun 16:00','26 Jun 00:00','29 Jun 08:00','30 Jun 16:00','2 Jul 00:00','3 Jul 08:00','6 Jul 16:00','8 Jul 00:00','9 Jul 08:00','10 Jul 16:00'];
const LONG = ['27 May 2026','29 May 20:00','3 Jun 12:00','8 Jun 04:00','10 Jun 20:00','15 Jun 12:00','18 Jun 04:00','22 Jun 20:00','25 Jun 12:00','30 Jun 04:00','2 Jul 20:00','7 Jul 12:00','10 Jul 04:00'];

const CHARTS = {
  eurusd: { candles: EUR, dy: 24, line: EUR_MA, lx: 13, times: SHORT, first: 13, price: 148, now: '1.14140',
    levels: ['1.14910','1.14720','1.14535','1.14345','','1.13970','1.13780','1.13590','1.13400','1.13215'] },
  gbpusd: { bars: [...GBP, ...GBP_LATE.map(v => v - 240)], dy: 44, line: GBP_MA, lx: 17, times: LONG, first: 13, price: 90, now: '1.34000',
    title: 'GBPUSD,H4   1.34038 1.34050 1.33926 1.34000',
    levels: ['1.34930','1.34530','1.34130','1.33740','1.33340','1.32940','1.32550','1.32150','1.31760','1.31360'] },
  usdchf: { bars: CHF, dy: 35, times: LONG, first: 8, price: 44, now: '0.80857', split: true,
    title: 'USDCHF,H4   0.80786 0.80896 0.80785 0.80857', levels: ['0.81505','','0.80305','0.79705','0.79105','0.78505','0.77905'],
    macd: true, lx: 13, sub: 'MACD(12,26,9) 0.00019 0.00007', subs: [['0.00365',219],['0.00',279],['-0.00187',307]] },
  usdjpy: { candles: JPY, dy: 35, times: SHORT, first: 8, price: 106, now: '161.697', split: true,
    title: 'USDJPY,H4   161.576 161.760 161.575 161.697', levels: ['162.920','162.500','162.090','','161.270','160.860','160.450'],
    cci: true, lx: 17, sub: 'CCI(14) -83.9614', subs: [['255.0189',219],['100',238],['0.00',255],['-100',272],['-344.3394',307]] }
};

function draw(host) {
  const c = CHARTS[host.dataset.chart];
  const W = host.clientWidth, H = host.clientHeight, R = W - 46, B = H - 21;
  const old = host.querySelector('svg.plot');
  if (old) old.remove();
  const svg = document.createElementNS(NS, 'svg');
  svg.setAttribute('class', 'plot');
  svg.setAttribute('viewBox', `0 0 ${W} ${H}`);
  const path = (cls, d) => { const p = document.createElementNS(NS, 'path'); p.setAttribute('class', cls); p.setAttribute('d', d); svg.append(p); };
  const rect = (cls, x, y, w, h) => { const r = document.createElementNS(NS, 'rect'); r.setAttribute('class', cls); Object.entries({ x, y, width: w, height: h }).forEach(([k, v]) => r.setAttribute(k, v)); svg.append(r); };
  const text = (s, x, y, cls = 'label') => { const t = document.createElementNS(NS, 'text'); t.setAttribute('class', cls); t.setAttribute('x', x); t.setAttribute('y', y); t.textContent = s; svg.append(t); };
  const Y = v => Math.round(v / 3 - c.dy);
  const main = c.split ? 209 : B;

  let grid = '', ticks = '';
  for (let x = 35; x < R; x += 32) grid += `M${x}.5 4V${main}` + (c.split ? `M${x}.5 212V${B}` : '');
  c.levels.forEach((s, i) => {
    const y = c.first + 33 * i;
    grid += `M4 ${y}.5H${R}`;
    if (s) { ticks += `M${R} ${y}.5h4`; text(s, R + 6, y + 4); }
  });
  path('grid', grid);
  if (c.macd) path('level', `M4 279.5H${R}`);
  if (c.cci) { path('level', `M4 238.5H${R}M4 272.5H${R}`); path('grid', `M4 255.5H${R}`); }
  path('now', `M4 ${c.price}.5H${R}`);

  if (c.macd) path('hist', MACD.map((v, k) => `M${3 + 4 * k}.5 279V${Y(v)}`).join(''));
  const pts = a => 'M' + a.map((v, i) => i % 2 ? (v / 3 - c.dy).toFixed(1) : (v / 3 - c.lx + .5).toFixed(1)).join(' ');
  if (c.line) path('ma', pts(c.line));
  if (c.macd) path('ma dashed', pts(MACD_SIG));
  if (c.cci) path('cci', pts(CCI));

  if (c.bars) {
    let d = '', prev = c.bars[2];
    for (let i = 0; i < c.bars.length; i += 3) {
      const x = 3 + 4 * (i / 3), [h, l, cl] = c.bars.slice(i, i + 3);
      const open = Math.min(l, Math.max(h, prev));
      d += `M${x}.5 ${Y(h)}V${Y(l) + 1}M${x - 1} ${Y(open)}.5h2M${x} ${Y(cl)}.5h2`;
      prev = cl;
    }
    path('bar', d);
  }
  if (c.candles) {
    let wick = '', hollow = '', full = '';
    c.candles.forEach(([h, t, b, l, f], k) => {
      const x = 3 + 8 * k, bt = Y(t), bh = Math.max(0, Y(b) - bt);
      if (Y(h) < bt) wick += `M${x}.5 ${Y(h)}V${bt}`;
      wick += `M${x}.5 ${bt + bh}V${Y(l) + 1}`;
      if (bh < 2) wick += `M${x - 2} ${bt}.5h5`;
      else if (f) full += `M${x - 1.5} ${bt}.5h4v${bh}h-4z`;
      else hollow += `M${x - 1.5} ${bt}.5h4v${bh}h-4z`;
    });
    path('bar', wick); path('bar hollow', hollow); path('bar full', full);
  }

  path('frame', `M3.5 ${main}.5V3.500H${R}.5V${main}.5z` + (c.split ? `M3.5 ${B}.5V211.5H${R}.5V${B}.5z` : ''));
  c.times.forEach((s, i) => { ticks += `M${3 + 64 * i}.5 ${B}v4`; text(s, 3 + 64 * i, B + 13); });
  path('frame', ticks);
  (c.subs || []).forEach(([s, y]) => text(s, R + 4, y + 4));
  rect('nowbox', R + 2, c.price - 5, 41, 11);
  text(c.now, R + 6, c.price + 4, 'label nowtext');
  if (c.title) { path('mark', 'M6 13l3.500-4 3.500 4z'); text(c.title, 18, 14); }
  if (c.sub) text(c.sub, 8, 224);
  host.prepend(svg);
}

document.getElementById('quotes').innerHTML = [
  ['USD...','0.80...',1],['GBP...','1.34...',0],['EUR...','1.14...',0],['USDJPY','161....',1],['USD...','1.41...',0],['AUD...','0.69...',1],
  ['EUR...','0.85...',0],['EUR...','1.64...',0],['EUR...','0.92...',1],['EURJPY','184....',0],['GBP...','1.08...',1],['CAD...','114....',1],
  ['GBPJPY','216....',0],['AUD...','1.20...',1],['AUD...','0.98...',1],['AUD...','0.56...',1]
].map(([s, p, up]) => `<tr class="${up ? 'up' : 'down'}"><td><svg><use href="#i-${up ? 'up' : 'down'}"/></svg>${s}</td><td>${p}</td><td>${p}</td></tr>`).join('');

document.querySelectorAll('.keys').forEach(k => {
  k.innerHTML = '<button aria-label="Minimize"><svg viewBox="0 0 12 12"><rect x="1.500" y="5.500" width="9" height="4" rx="1"/></svg></button>' +
    '<button aria-label="Restore"><svg viewBox="0 0 12 12"><rect x="1.500" y="1.500" width="9" height="8"/><rect x="4.500" y="4.500" width="3" height="2"/></svg></button>' +
    '<button aria-label="Close"><svg viewBox="0 0 12 12"><path d="M1 1h3l2 2.500L8 1h3L8 5.500 11 10H8L6 7.500 4 10H1l3-4.500z"/></svg></button>';
});

const drawAll = () => document.querySelectorAll('.chart').forEach(draw);
drawAll();
addEventListener('resize', drawAll);
```
FILE: styles.css
```css
* { box-sizing: border-box; }
body {
  margin: 0;
  height: 100vh;
  display: flex;
  flex-direction: column;
  overflow: hidden;
  background: #f0f0f0;
  color: #111;
  font: 12px/16px Roboto, "Noto Sans", sans-serif;
}
button { font: inherit; color: inherit; background: none; border: 0; padding: 0; margin: 0; }
h1, h2, h3, ul { margin: 0; padding: 0; font-size: inherit; font-weight: 400; }
svg { display: block; flex: none; }
.defs { position: absolute; width: 0; height: 0; }

.titlebar { flex: none; display: flex; align-items: center; height: 30px; margin-top: -14px; padding: 0 8px 0 2px; background: #fff; }
.appicon { width: 16px; height: 16px; margin-right: 7px; }
.titletext { flex: 1; white-space: nowrap; }
.syskeys { display: flex; gap: 35px; padding-right: 2px; }
.syskeys svg { width: 10px; height: 10px; }

.menubar { position: relative; z-index: 5; flex: none; display: flex; height: 21px; border-bottom: 1px solid #a0a0a0; padding-bottom: 1px; }
.menubar > button { padding: 0 8px; }
.menubar > button:first-child { padding-left: 2px; }
.menuwrap { position: relative; display: flex; }
.open { width: 42px; border: 1px solid #808080; border-bottom: 0; margin: 0 3px 0 2px; }
.menu {
  position: absolute; left: 2px; top: 18px; width: 255px; padding: 2px;
  background: linear-gradient(90deg, #f0f0f0 26px, #fff 26px);
  border: 1px solid #666; box-shadow: 2px 2px 2px rgba(0,0,0,.35);
}
.menu button { display: flex; align-items: center; width: 100%; height: 23px; padding: 0 12px 0 1px; }
.menu svg { width: 18px; height: 18px; }
.menu span { flex: 1; text-align: left; padding-left: 13px; white-space: nowrap; }
.menu kbd { font: inherit; }
.menu hr { height: 1px; margin: 4px 0 4px 32px; border: 0; background: #e2e2e2; }
.menu .hot { background: #bed3e6; border: 1px solid #2a7bbd; padding: 0 11px 0 0; }
.callout { position: absolute; left: -4px; top: -8px; width: 55px; height: 35px; border: 6px solid #fe2c0a; }

.toolbar { flex: none; display: flex; height: 27px; border-bottom: 1px solid #a8a8a8; border-top: 1px solid #fff; }
.toolbar.second { border-bottom-color: #888; }
.tools { display: flex; align-items: center; gap: 3px; border-right: 1px solid #a0a0a0; }
.tools button { display: flex; align-items: center; justify-content: center; width: 25px; height: 24px; }
.tools svg { width: 18px; height: 18px; }
.tools .on { border: 1px solid #a8a8a8; border-right-color: #fff; border-bottom-color: #fff; background: #f7f7f7; }
.tools .dd { width: 34px; justify-content: flex-start; gap: 5px; padding-left: 1px; }
.dd::after { content: ""; border: 3px solid transparent; border-top: 4px solid #111; border-bottom: 0; }
.sep { width: 2px; height: 20px; border-left: 1px solid #a0a0a0; border-right: 1px solid #fff; }
.sep.wide { margin-right: 3px; }
.grip { width: 3px; height: 20px; margin: 0 0 0 3px; background: repeating-linear-gradient(#999 0 1px, #f0f0f0 1px 2px); }
.standard { width: 498px; padding-left: 3px; }
.tools .auto { width: auto; margin-left: auto; padding-right: 7px; }
.charts { padding-right: 3px; }
.drawing { width: 558px; padding: 0 2px; }
.tools .period { color: #555; font-size: 11px; }
.tools .first { margin-left: auto; }
.alerts { display: flex; align-items: center; gap: 10px; margin-left: auto; padding-right: 3px; }
.alerts svg { width: 15px; height: 15px; }
.bubble { position: relative; width: 20px; height: 20px; padding-top: 6px; }
.bubble b { position: absolute; right: -2px; top: -1px; width: 16px; height: 16px; border-radius: 8px; background: #e0331c; color: #fff; font-weight: 400; line-height: 16px; }

.workspace { flex: 1; min-height: 0; display: flex; }
.side { flex: none; width: 182px; display: flex; flex-direction: column; padding-right: 4px; border-right: 1px solid #999; }
.dock { display: flex; flex-direction: column; border-bottom: 1px solid #a0a0a0; padding-bottom: 3px; }
.dock.grow { flex: 1; min-height: 0; margin-top: 1px; }
.dockhead { display: flex; align-items: center; justify-content: space-between; height: 16px; background: linear-gradient(90deg, #c6d4e6, #d8e4f0 164px, #f0f0f0 164px); border-bottom: 1px solid #a0a0a0; white-space: nowrap; }
.dockhead button { width: 12px; font-size: 14px; line-height: 12px; font-weight: 700; }
.watch { position: relative; background: #f0f0f0; }
.quotes { width: 161px; border-collapse: collapse; table-layout: fixed; background: #fff; }
.quotes th { height: 25px; padding: 0 6px 0 4px; font-weight: 400; text-align: right; border-right: 1px solid #ddd; border-bottom: 1px solid #c8c8c8; }
.quotes th:first-child { width: 67px; text-align: left; }
.quotes td { height: 20px; padding: 0 4px 0 0; text-align: right; border-right: 1px solid #c8c8c8; border-bottom: 1px solid #c8c8c8; line-height: 16px; }
.quotes td:first-child { display: flex; align-items: center; gap: 5px; padding-left: 2px; color: #111; }
.quotes td svg { width: 12px; height: 12px; }
.quotes .up { color: #1616d8; }
.quotes .down { color: #cc1717; }
.thumb { position: absolute; right: 8px; top: 17px; width: 2px; height: 216px; background: #8a8a8a; }
.tabs { flex: none; display: flex; height: 21px; border-top: 1px solid #000; color: #707070; }
.tabs button { position: relative; padding: 0 10px; white-space: nowrap; }
.tabs button:not(.active)::after { content: ""; position: absolute; right: 0; top: 4px; height: 12px; border-right: 1px solid #707070; }
.tabs button:has(+ .active)::after { display: none; }
.tabs .active { background: #fff; color: #000; border: 1px solid #000; border-top: 0; border-bottom-width: 2px; margin-top: -1px; padding: 0 9px; }
.tree { flex: 1; list-style: none; background: #fff; padding-top: 1px; overflow: hidden; }
.tree li { position: relative; display: flex; align-items: center; height: 18px; gap: 5px; white-space: nowrap; }
.tree svg { width: 17px; height: 17px; }
.tree .root { padding-left: 3px; }
.tree .l1 { padding-left: 7px; }
.tree .l2 { padding-left: 28px; }
.tree .l3 { padding-left: 64px; gap: 2px; }
.tree li:not(.root)::before { content: ""; position: absolute; left: 11px; top: 0; height: 18px; border-left: 1px dotted #888; }
.tree .l3::before, .tree .l2::before { opacity: .8; }
.tree .last::before { max-height: 9px; }
.tree li:not(.root)::after { content: ""; position: absolute; left: 17px; top: 9px; width: 6px; border-top: 1px dotted #888; }
.tree .l2::after { margin-left: 21px; }
.tree .l3::after { margin-left: 36px; min-width: 11px; }
.knob { position: relative; z-index: 1; width: 9px; height: 9px; border: 1px solid #999; background: #fff; font: 9px/7px "Liberation Mono", monospace; text-align: center; margin-right: 2px; }

.desk { flex: 1; min-width: 0; display: flex; flex-direction: column; overflow: hidden; margin-left: 1px; }
.mdi { flex: 1; min-height: 0; display: grid; grid-template: 1fr 1fr / 1fr 1fr; gap: 2px 1px; margin-right: -5px; padding: 1px 0 2px 1px; background: #53575f; border-top: 1px solid #888; }
.win { min-width: 0; display: flex; flex-direction: column; padding: 0 10px 9px 9px; background: #d8e3ef; border-radius: 5px 5px 0 0; box-shadow: inset 1px 1px #f4f8fc; }
.focus { background: #b9d1ea; box-shadow: inset 1px 1px #eaf4fd, inset -1px -1px #5bc8e6; }
.wintitle { display: flex; align-items: center; height: 31px; margin: 0 -9px; padding: 5px 9px 0; background: linear-gradient(#bccad8, #d8e3ef); border-radius: 5px 5px 0 0; color: #8f9aa5; border-bottom: 1px solid #777; }
.focus .wintitle { background: linear-gradient(#9ab6d2, #b9d1ea); margin-right: -8px; padding-right: 8px; color: #111; }
.ic { width: 16px; height: 16px; margin-right: 4px; }
.keys { display: flex; gap: 2px; margin-left: auto; }
.keys button { display: grid; place-items: center; width: 32px; height: 18px; border: 1px solid #8795ab; border-radius: 2px; background: #c9d6e5; box-shadow: inset 0 0 0 1px #dfe9f3; }
.keys svg { width: 12px; height: 12px; fill: #fff; stroke: #5b6470; }
.focus .keys button { background: linear-gradient(#c4d6ea 50%, #a3bcd8 50%); }
.focus .keys button:last-child { background: linear-gradient(#e0a091 50%, #c03f28 50%); border-color: #6a1f1f; }
.chart { position: relative; flex: 1; min-height: 0; background: #000; box-shadow: 0 1px #fff, 1px 0 #fff, -1px 0 #777; }
.plot { width: 100%; height: 100%; shape-rendering: crispEdges; fill: none; }
.label { fill: #fff; font: 9px "Noto Sans", sans-serif; white-space: pre; }
.nowtext { fill: #000; }
.nowbox, .mark { fill: #fff; }
.grid { stroke: #75818d; stroke-dasharray: 3 3; }
.level { stroke: #c4c4c4; stroke-dasharray: 3 3; }
.now { stroke: #778899; }
.frame { stroke: #fff; }
.hist { stroke: #c8c8c8; }
.ma { stroke: #c42020; shape-rendering: auto; }
.dashed { stroke-dasharray: 3 2; }
.cci { stroke: #4aa3a0; shape-rendering: auto; }
.bar { stroke: #2fd62f; }
.hollow { fill: #000; }
.full { fill: #fff; }

.trade { position: absolute; left: 6px; top: 21px; display: grid; grid-template-columns: 46px 1fr 1fr 46px; width: 193px; grid-template-rows: 22px 34px; column-gap: 2px; color: #fff; background: #0a0a50; font-family: "Open Sans", "Noto Sans", sans-serif; }
.trade.red { background: #4d0000; }
.narrow { width: 187px; grid-template-columns: 43px 1fr 1fr 43px; }
.side-btn { background: linear-gradient(#5050fa, #3838e8); border-bottom: 1px solid #2a2ad0; font-size: 11px; }
.red .side-btn { background: linear-gradient(#fa5050, #e63a3a); border-bottom-color: #b01515; }
.vol { grid-column: span 2; display: flex; margin: 1px 0 2px; border: 1px solid #888; background: #fff; color: #111; }
.vol button { display: grid; place-items: center; width: 19px; background: #ececec; }
.vol svg { width: 5px; height: 3px; }
.vol input { flex: 1; min-width: 0; border: 0; border-inline: 1px solid #aaa; padding: 0 4px; text-align: right; font: inherit; line-height: 16px; color: inherit; }
.price { grid-column: span 2; position: relative; display: flex; align-items: baseline; justify-content: center; gap: 4px; padding-left: 2px; background: linear-gradient(#3030dd, #0000a0); line-height: 34px; }
.red .price { background: linear-gradient(#dc3030, #a80000); }
.price small { font-size: 12px; font-weight: 600; }
.price b { font-size: 30px; font-weight: 400; }
.price sup { align-self: flex-start; font-size: 12px; font-weight: 600; line-height: 17px; }

.desktabs { padding-left: 3px; }
.desktabs button { padding: 0 11px; }
.desktabs .active { padding: 0 10px; }
.scrollers { margin-left: auto; color: #888; padding-right: 1px; }
.scrollers span { margin-left: 12px; }

.terminal { flex: none; display: flex; margin-top: 4px; border-bottom: 1px solid #a0a0a0; padding-bottom: 4px; }
.strip { flex: none; width: 9px; display: flex; flex-direction: column; align-items: center; background: linear-gradient(#f0f0f0 12px, #d8e4f0 14px, #c6d4e6); overflow: hidden; }
.strip button { line-height: 10px; font-weight: 700; }
.strip span { margin-top: auto; writing-mode: vertical-rl; transform: rotate(180deg); font-size: 11px; line-height: 12px; }
.mailpane { flex: 1; min-width: 0; border-left: 1px solid #999; border-top: 1px solid #999; }
.mailwrap { position: relative; padding-right: 13px; }
.mail { width: 100%; table-layout: fixed; border-collapse: collapse; background: #fff; }
.mail th { height: 25px; padding: 0 5px 0 6px; text-align: left; font-weight: 400; border-right: 1px solid #ddd; border-bottom: 1px solid #c8c8c8; }
.mail th:nth-child(2) { width: 36.5%; padding-left: 7px; }
.mail th:nth-child(3) { width: 131px; text-align: right; }
.mail td { height: 20px; padding: 0 4px 0 5px; border-right: 1px solid #ccc; border-bottom: 1px solid #c8c8c8; font-weight: 700; white-space: nowrap; }
.mail td:first-child { padding-left: 2px; }
.mail td svg { display: inline-block; vertical-align: -2px; width: 14px; height: 12px; margin-right: 7px; }
.mail td:last-child { text-align: right; }
.mail tr:nth-child(odd) td { background: #ebebeb; }
.mail .read td { font-weight: 400; }
.mailthumb { position: absolute; right: 3px; top: 17px; width: 2px; height: 42px; background: #8a8a8a; }
.termtabs { padding-left: 3px; }
.termtabs button { padding: 0 10px 0 9px; }
.termtabs .active { padding: 0 8px; }
.tabs sub { color: #e02020; font-size: 9px; font-weight: 700; margin-left: 2px; vertical-align: -4px; line-height: 0; }

.status { flex: none; display: flex; height: 16px; padding-top: 4px; overflow: hidden; border-bottom: 2px solid #1c1c1c; white-space: nowrap; }
.hint { flex: 1; }
.cell { width: 88px; border-left: 1px solid #bbb; padding-left: 5px; }
.profile { width: 121px; }
.net { display: flex; gap: 4px; width: 143px; padding-left: 8px; }
.net svg { width: 24px; height: 14px; }

.pointer { position: absolute; left: 418px; top: 32px; width: 220px; height: 130px; z-index: 9; }
```
